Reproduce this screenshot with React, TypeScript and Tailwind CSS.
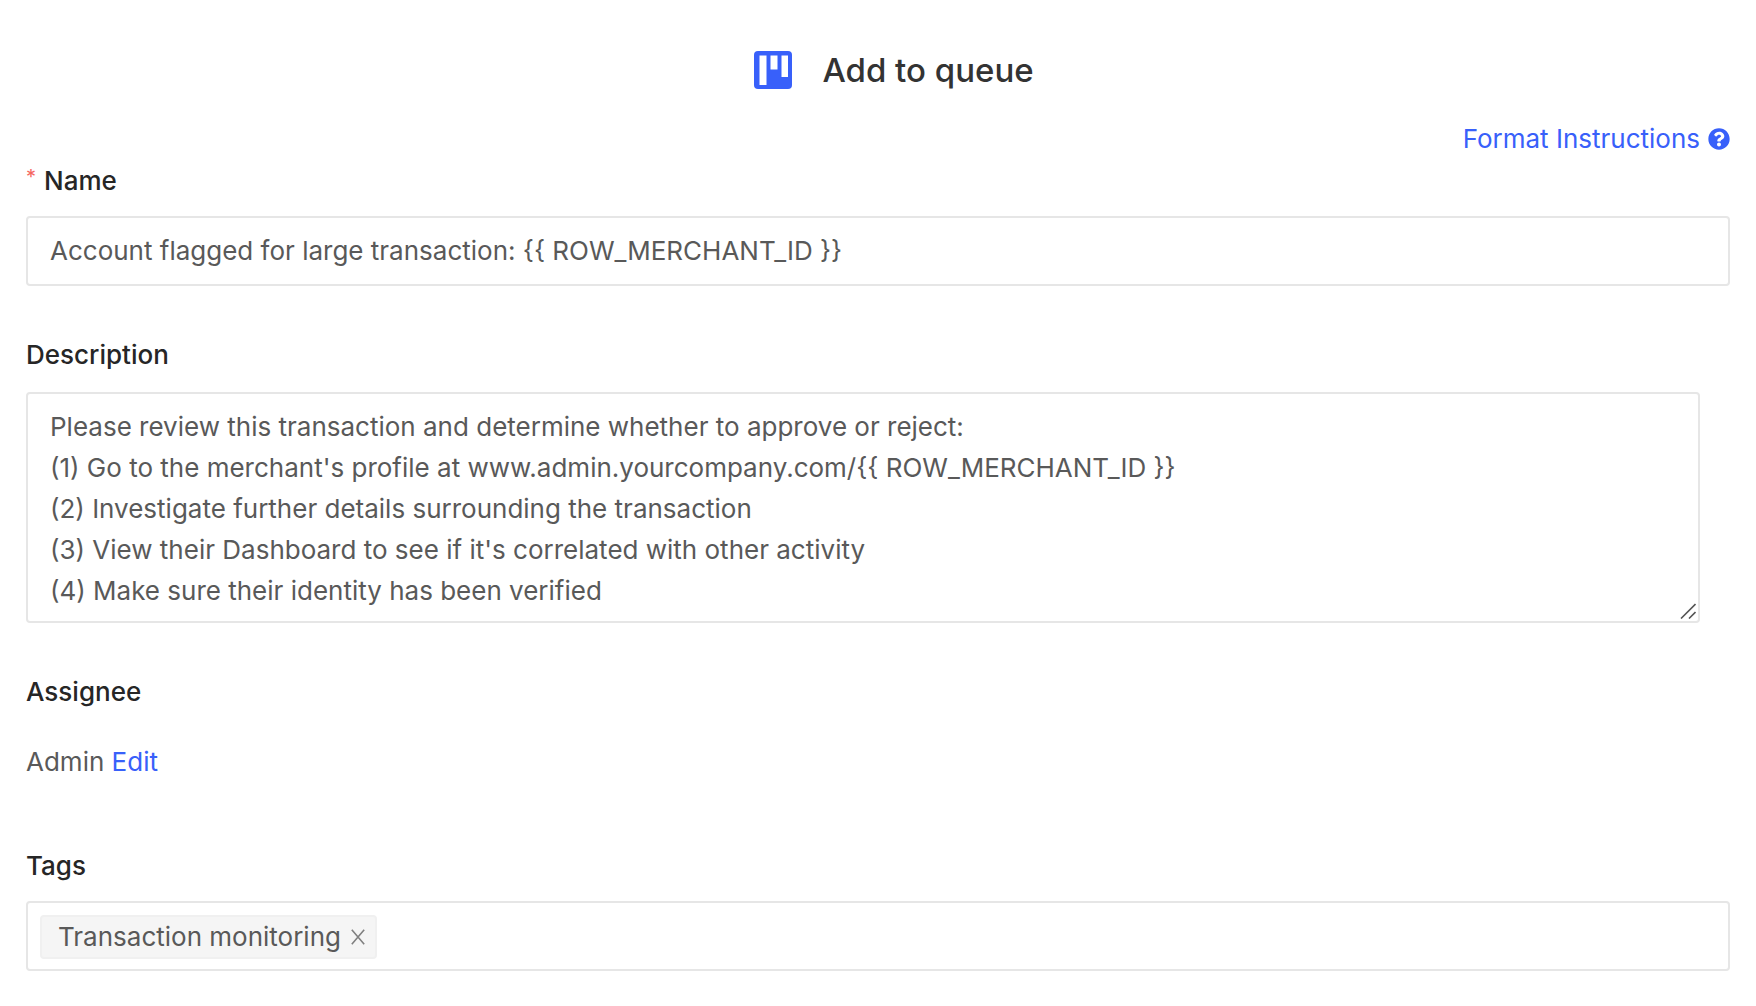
import { useState } from "react";
import type { ReactNode } from "react";

const INITIAL_DESCRIPTION = `Please review this transaction and determine whether to approve or reject:
(1) Go to the merchant's profile at www.admin.yourcompany.com/{{ ROW_MERCHANT_ID }}
(2) Investigate further details surrounding the transaction
(3) View their Dashboard to see if it's correlated with other activity
(4) Make sure their identity has been verified`;

function QueueIcon() {
  return (
    <svg viewBox="0 0 38 38" className="size-[38px]" aria-hidden="true">
      <rect width="38" height="38" rx="4" fill="#3860fa" />
      <g fill="#fff">
        <rect x="5.5" y="4.5" width="7" height="29.5" />
        <rect x="16.5" y="4.5" width="7" height="14" />
        <rect x="27.5" y="4.5" width="6.5" height="21.5" />
      </g>
    </svg>
  );
}

function HelpIcon() {
  return (
    <svg viewBox="0 0 512 512" className="size-[22px]" fill="currentColor" aria-hidden="true">
      <path d="M504 256c0 136.997-111.043 248-248 248S8 392.997 8 256C8 119.083 119.043 8 256 8s248 111.083 248 248zM262.655 90c-54.497 0-89.255 22.957-116.549 63.758-3.536 5.286-2.353 12.415 2.715 16.258l34.699 26.31c5.205 3.947 12.621 3.008 16.665-2.122 17.864-22.658 30.113-35.797 57.303-35.797 20.429 0 45.698 13.148 45.698 32.958 0 14.976-12.363 22.667-32.534 33.976C247.128 238.528 216 254.941 216 296v4c0 6.627 5.373 12 12 12h56c6.627 0 12-5.373 12-12v-1.333c0-28.462 83.186-29.647 83.186-106.667 0-58.002-60.165-102-116.531-102zM256 338c-25.365 0-46 20.635-46 46 0 25.364 20.635 46 46 46s46-20.636 46-46c0-25.365-20.635-46-46-46z" />
    </svg>
  );
}

function CloseIcon() {
  return (
    <svg viewBox="0 0 14 16" className="h-4 w-[14px]" fill="none" stroke="currentColor" strokeWidth="1.6" aria-hidden="true">
      <path d="M.8.8l12.4 14.4M13.2.8L.8 15.2" />
    </svg>
  );
}

function FieldLabel({ htmlFor, required, children }: { htmlFor: string; required?: boolean; children: ReactNode }) {
  return (
    <label htmlFor={htmlFor} className="flex h-10 items-center font-medium text-[#262626]">
      {required && (
        <span className="mr-2 pb-2 text-xl leading-10 font-normal text-[#f5655f]" aria-hidden="true">
          *
        </span>
      )}
      {children}
    </label>
  );
}

export default function App() {
  const [name, setName] = useState("Account flagged for large transaction: {{ ROW_MERCHANT_ID }}");
  const [description, setDescription] = useState(INITIAL_DESCRIPTION);
  const [tags, setTags] = useState(["Transaction monitoring"]);

  return (
    <form className="min-h-screen bg-white px-[26px] pt-[50px] font-['Inter',sans-serif] text-[26px] leading-10 text-[#595959]">
      <header className="flex h-10 items-center justify-center gap-[30px] pl-8">
        <QueueIcon />
        <h1 className="text-[33px] font-medium text-[#333]">Add to queue</h1>
      </header>

      <div className="mt-[29px] flex h-10 justify-end">
        <a href="#format" className="flex items-center gap-2 text-[#3860fa]">
          Format Instructions
          <HelpIcon />
        </a>
      </div>

      <section className="mt-[2px]">
        <FieldLabel htmlFor="name" required>
          Name
        </FieldLabel>
        <input
          id="name"
          value={name}
          onChange={(e) => setName(e.target.value)}
          className="mt-[15px] block h-[70px] w-full rounded-[4px] border-2 border-[#e6e6e6] px-[22px] pb-[2px] outline-none"
        />
      </section>

      <section className="mt-[49px]">
        <FieldLabel htmlFor="description">Description</FieldLabel>
        <div className="relative mt-[17px] mr-[30px]">
          <textarea
            id="description"
            rows={5}
            value={description}
            onChange={(e) => setDescription(e.target.value)}
            className="block w-full resize-none overflow-hidden rounded-[4px] border-2 border-[#e6e6e6] px-[22px] pt-3 pb-[10px] leading-[41px] outline-none"
          />
          <svg viewBox="0 0 16 16" className="absolute right-1 bottom-1 size-4" stroke="#555" strokeWidth="1.6" aria-hidden="true">
            <path d="M1 15.5L15.5 1M9 15.5L15.5 9" />
          </svg>
        </div>
      </section>

      <section className="mt-[49px]">
        <h2 className="font-medium text-[#262626]">Assignee</h2>
        <div className="mt-[30px]">
          Admin{" "}
          <button type="button" className="text-[#3860fa]">
            Edit
          </button>
        </div>
      </section>

      <section className="mt-16 pb-8">
        <FieldLabel htmlFor="tags">Tags</FieldLabel>
        <div className="mt-[15px] flex h-[70px] items-center gap-2 rounded-[4px] border-2 border-[#e6e6e6] px-3">
          {tags.map((tag) => (
            <span key={tag} className="mt-[2px] flex h-11 items-center gap-[10px] rounded-[4px] border-2 border-[#f0f0f0] bg-[#f5f5f5] pr-[10px] pl-4">
              {tag}
              <button
                type="button"
                aria-label={`Remove ${tag}`}
                onClick={() => setTags(tags.filter((t) => t !== tag))}
                className="text-[#808080]"
              >
                <CloseIcon />
              </button>
            </span>
          ))}
          <input id="tags" className="h-11 min-w-0 flex-1 outline-none" />
        </div>
      </section>
    </form>
  );
}
